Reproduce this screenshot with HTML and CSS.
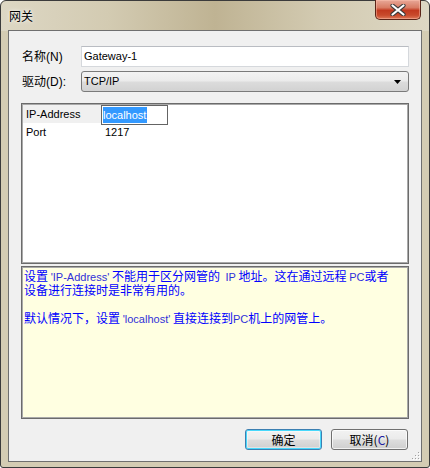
FILE: index.html
```html
<!DOCTYPE html>
<html>
<head>
<meta charset="utf-8">
<link rel="stylesheet" href="styles.css">
</head>
<body>
<div class="window">
  <div class="titlebar">
    <span class="title">网关</span>
    <div class="close">
      <svg width="16" height="12" viewBox="0 0 16 12">
        <path d="M2.5 1.5 L13.5 10.5 M13.5 1.5 L2.5 10.5" stroke="#3a3a3a" stroke-width="4.2" stroke-linecap="round"/>
        <path d="M2.5 1.5 L13.5 10.5 M13.5 1.5 L2.5 10.5" stroke="#ffffff" stroke-width="2.2" stroke-linecap="round"/>
      </svg>
    </div>
  </div>
  <div class="client">
    <div class="field first">
      <label class="lbl">名称(N)</label>
      <div class="input">Gateway-1</div>
    </div>
    <div class="field">
      <label class="lbl">驱动(D):</label>
      <div class="select"><span>TCP/IP</span><svg class="arrow" width="7" height="4" viewBox="0 0 7 4"><path d="M0 0 H7 L3.5 4 Z" fill="#000"/></svg></div>
    </div>
    <div class="list">
      <div class="row">
        <div class="key sel">IP-Address</div>
        <div class="val"><div class="editor"><span class="hl">localhost</span></div></div>
      </div>
      <div class="row">
        <div class="key">Port</div>
        <div class="val">1217</div>
      </div>
    </div>
    <div class="help">
      <div class="line">设置 <span class="lat">'IP-Address'</span> 不能用于区分网管的&nbsp;&nbsp;<span class="lat">IP</span> 地址。这在通过远程 <span class="lat">PC</span>或者</div>
      <div class="line">设备进行连接时是非常有用的。</div>
      <div class="line">&nbsp;</div>
      <div class="line">默认情况下，设置 <span class="lat">'localhost'</span> 直接连接到<span class="lat">PC</span>机上的网管上。</div>
    </div>
    <div class="buttons">
      <div class="btn default">确定</div>
      <div class="btn">取消(<span class="lat2">C</span>)</div>
    </div>
    <svg class="grip" width="8" height="8" viewBox="0 0 8 8">
      <g fill="#a0a0a0">
        <rect x="6" y="0" width="1" height="1"/>
        <rect x="3" y="3" width="1" height="1"/><rect x="6" y="3" width="1" height="1"/>
        <rect x="0" y="6" width="1" height="1"/><rect x="3" y="6" width="1" height="1"/><rect x="6" y="6" width="1" height="1"/>
      </g>
      <g fill="#ffffff">
        <rect x="7" y="1" width="1" height="1"/>
        <rect x="4" y="4" width="1" height="1"/><rect x="7" y="4" width="1" height="1"/>
        <rect x="1" y="7" width="1" height="1"/><rect x="4" y="7" width="1" height="1"/><rect x="7" y="7" width="1" height="1"/>
      </g>
    </svg>
  </div>
</div>
</body>
</html>
```

FILE: styles.css
```css
html, body {
  margin: 0;
  padding: 0;
  background: #ffffff;
}

body {
  font-family: "Liberation Sans", "Noto Sans CJK SC", sans-serif;
  font-size: 12px;
  color: #000;
}

.window {
  box-sizing: border-box;
  width: 430px;
  height: 468px;
  border: 1px solid #3b3b3b;
  border-radius: 6px 6px 3px 3px;
  padding: 0 7px 5px 7px;
  background:
    linear-gradient(90deg, #ddd7c4 0%, #d3cbb2 25%, #bfb393 50%, #d3cbb2 75%, #ddd7c4 100%) top / 100% 30px no-repeat,
    #d4ccb3;
  display: flex;
  flex-direction: column;
}

.titlebar {
  height: 29px;
  display: flex;
  justify-content: space-between;
  align-items: flex-start;
  flex: none;
}

.title {
  margin-left: 1px;
  margin-top: 8px;
  font-family: "Noto Sans CJK SC", sans-serif;
  font-size: 12px;
  line-height: 14px;
  color: #000;
  text-shadow: 0 0 5px rgba(255, 255, 255, 0.9), 0 0 2px rgba(255, 255, 255, 0.8);
}

.close {
  width: 46px;
  height: 20px;
  margin-top: -1px;
  margin-right: 1px;
  box-sizing: border-box;
  border: 1px solid #5a2418;
  border-top: none;
  border-radius: 0 0 5px 5px;
  background: linear-gradient(180deg, #e8a898 0%, #d87c64 40%, #c2391f 55%, #c84a2c 80%, #de7858 100%);
  box-shadow: inset 0 0 0 1px rgba(255, 200, 180, 0.45);
  display: flex;
  align-items: center;
  justify-content: center;
}

.client {
  box-sizing: border-box;
  height: 432px;
  border: 1px solid #6f6f6f;
  background: #f0f0f0;
  display: flex;
  flex-direction: column;
  flex: none;
}

.field {
  display: flex;
  align-items: center;
  padding-left: 13px;
  margin-top: 4px;
}

.field.first {
  margin-top: 15px;
}

.lbl {
  width: 59px;
  flex: none;
  font-size: 12px;
  line-height: 14px;
}

.input {
  box-sizing: border-box;
  width: 328px;
  height: 21px;
  border: 1px solid #d5d8dc;
  border-top-color: #b9bcc2;
  background: #fff;
  font-size: 11px;
  line-height: 19px;
  padding-left: 2px;
}

.select {
  box-sizing: border-box;
  width: 328px;
  height: 21px;
  border: 1px solid #7a7a7a;
  border-radius: 3px;
  background: linear-gradient(180deg, #f3f3f3 0%, #ebebeb 48%, #dcdcdc 52%, #d2d2d2 100%);
  font-size: 11px;
  line-height: 19px;
  padding: 0 6px 0 2px;
  display: flex;
  justify-content: space-between;
  align-items: center;
}

.arrow {
  margin-right: 1px;
}

.list {
  box-sizing: border-box;
  width: 388px;
  height: 161px;
  margin: 11px 0 0 12px;
  border: 1px solid #6b6b6b;
  box-shadow: inset 0 0 0 1px #a9a9a9;
  background: #fff;
  padding: 1px;
  font-size: 11px;
}

.row {
  display: flex;
  height: 18px;
  line-height: 18px;
}

.key {
  width: 78px;
  padding-left: 3px;
  box-sizing: border-box;
}

.key.sel {
  background: #f0f0f0;
}

.val {
  position: relative;
  padding-left: 4px;
}

.editor {
  position: absolute;
  left: 0;
  top: 0;
  box-sizing: border-box;
  width: 67px;
  height: 20px;
  border: 1px solid #646464;
  background: #fff;
  padding: 1px 0 0 1px;
  line-height: 16px;
}

.hl {
  background: #3399ff;
  color: #fff;
  display: inline-block;
  padding-right: 1px;
}

.help {
  box-sizing: border-box;
  width: 388px;
  height: 153px;
  margin: 2px 0 0 12px;
  border: 1px solid #6b6b6b;
  box-shadow: inset 0 0 0 1px #a9a9a9;
  background: #ffffe1;
  padding: 2px 2px 0 2px;
  color: #0000ff;
  font-family: "Noto Sans CJK SC", sans-serif;
  font-size: 12px;
}

.line {
  height: 14px;
  line-height: 14px;
  white-space: nowrap;
}

.lat {
  font-family: "Liberation Sans", sans-serif;
  font-size: 11px;
  color: #3030d8;
}

.buttons {
  display: flex;
  justify-content: flex-end;
  gap: 9px;
  margin-top: 10px;
  padding-right: 13px;
}

.btn {
  box-sizing: border-box;
  width: 77px;
  height: 21px;
  border: 1px solid #707070;
  border-radius: 3px;
  background: linear-gradient(180deg, #f2f2f2 0%, #ebebeb 48%, #dddddd 52%, #cfcfcf 100%);
  box-shadow: inset 0 0 0 1px rgba(255, 255, 255, 0.7);
  display: flex;
  align-items: center;
  justify-content: center;
  font-family: "Noto Sans CJK SC", sans-serif;
  font-size: 12px;
  line-height: 14px;
}

.btn.default {
  border-color: #3c7fb1;
  box-shadow: inset 0 0 0 1px #48d8fb, inset 0 0 0 2px rgba(255,255,255,0.4);
}

.lat2 {
  color: #2020a0;
}

.grip {
  align-self: flex-end;
  margin-top: auto;
  margin-right: 1px;
  margin-bottom: 1px;
}
```
